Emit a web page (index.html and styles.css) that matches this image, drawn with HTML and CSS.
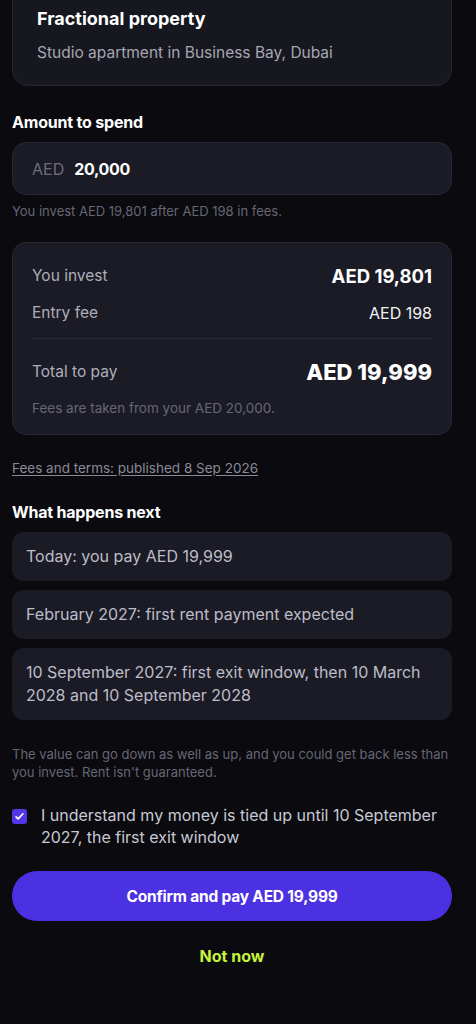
FILE: index.html
```html
<!DOCTYPE html>
<html lang="en">
<head>
    <meta charset="UTF-8">
    <meta name="viewport" content="width=device-width, initial-scale=1.0">
    <title>Confirm investment</title>
    <link rel="stylesheet" href="styles.css">
</head>
<body>
    <div class="page">
        <div class="property-card">
            <div class="property-title">Fractional property</div>
            <div class="property-sub">Studio apartment in Business Bay, Dubai</div>
        </div>

        <div class="section-label amount-label">Amount to spend</div>
        <div class="amount-input">
            <span class="currency">AED</span>
            <span class="amount-value">20,000</span>
        </div>
        <div class="hint">You invest AED 19,801 after AED 198 in fees.</div>

        <div class="summary-card">
            <div class="row">
                <span class="row-label">You invest</span>
                <span class="row-value strong">AED 19,801</span>
            </div>
            <div class="row row-fee">
                <span class="row-label">Entry fee</span>
                <span class="row-value">AED 198</span>
            </div>
            <div class="divider"></div>
            <div class="row row-total">
                <span class="row-label">Total to pay</span>
                <span class="row-value total">AED 19,999</span>
            </div>
            <div class="summary-note">Fees are taken from your AED 20,000.</div>
        </div>

        <a href="#" class="terms-link">Fees and terms: published 8 Sep 2026</a>

        <div class="section-label next-label">What happens next</div>
        <div class="steps">
            <div class="step">Today: you pay AED 19,999</div>
            <div class="step">February 2027: first rent payment expected</div>
            <div class="step">10 September 2027: first exit window, then 10 March 2028 and 10 September 2028</div>
        </div>

        <p class="risk">The value can go down as well as up, and you could get back less than you invest. Rent isn't guaranteed.</p>

        <label class="consent">
            <span class="checkbox">
                <svg viewBox="0 0 16 16" width="11" height="11"><path d="M3 8.5l3 3 7-7.5" fill="none" stroke="#fff" stroke-width="2.4" stroke-linecap="round" stroke-linejoin="round"/></svg>
            </span>
            <span class="consent-text">I understand my money is tied up until 10 September 2027, the first exit window</span>
        </label>

        <button class="confirm">Confirm and pay AED 19,999</button>
        <div class="not-now">Not now</div>
    </div>
</body>
</html>
```

FILE: styles.css
```css
body {
    background-color: #0a0a0f;
    color: #ffffff;
    font-family: 'Inter', 'Noto Sans', sans-serif;
    margin: 0;
    overflow: hidden;
}

.page {
    padding: 0 24px 0 12px;
    margin-top: -16px;
}

.property-card {
    background-color: #17171f;
    border: 1px solid #262631;
    border-radius: 16px;
    padding: 22px 24px 21px;
}

.property-title {
    font-size: 18px;
    font-weight: 700;
    line-height: 24px;
}

.property-sub {
    margin-top: 11px;
    font-size: 15.5px;
    line-height: 22px;
    color: #a6a6b2;
}

.section-label {
    font-size: 16px;
    font-weight: 700;
    line-height: 20px;
    letter-spacing: -0.2px;
}

.amount-label {
    margin-top: 26px;
}

.amount-input {
    margin-top: 10px;
    height: 51px;
    background-color: #1b1b25;
    border: 1px solid #272733;
    border-radius: 14px;
    display: flex;
    align-items: center;
    padding: 0 19px;
}

.currency {
    color: #6d6d7a;
    font-size: 16px;
}

.amount-value {
    margin-left: 10px;
    font-size: 16px;
    font-weight: 700;
    letter-spacing: -0.3px;
}

.hint {
    margin-top: 8px;
    font-size: 13px;
    line-height: 16px;
    color: #676774;
}

.summary-card {
    margin-top: 23px;
    background-color: #1b1b25;
    border: 1px solid #272733;
    border-radius: 14px;
    padding: 21px 19px 17px;
}

.row {
    display: flex;
    justify-content: space-between;
    align-items: center;
    line-height: 24px;
}

.row-fee {
    margin-top: 13px;
}

.row-label {
    font-size: 15.5px;
    color: #aeaeba;
}

.row-value {
    font-size: 16px;
    color: #f2f2f6;
}

.row-value.strong {
    font-size: 18.5px;
    font-weight: 700;
    color: #ffffff;
}

.divider {
    margin-top: 13px;
    border-top: 1px solid #2b2b37;
}

.row-total {
    margin-top: 18px;
    line-height: 30px;
}

.row-value.total {
    font-size: 22px;
    font-weight: 800;
    color: #ffffff;
}

.summary-note {
    margin-top: 12px;
    font-size: 13.5px;
    line-height: 18px;
    color: #676774;
}

.terms-link {
    display: inline-block;
    margin-top: 24px;
    font-size: 13.5px;
    line-height: 18px;
    color: #8a8a97;
    text-decoration: underline;
    text-underline-offset: 2px;
}

.next-label {
    margin-top: 25px;
}

.steps {
    margin-top: 10px;
    display: flex;
    flex-direction: column;
    gap: 9px;
}

.step {
    background-color: #1b1b25;
    border-radius: 12px;
    padding: 13px 14px;
    font-size: 16px;
    line-height: 23px;
    color: #bdbdc8;
}

.risk {
    margin: 25px 0 0;
    font-size: 13px;
    line-height: 18px;
    color: #676774;
}

.consent {
    margin-top: 23px;
    display: flex;
    align-items: flex-start;
    gap: 14px;
}

.checkbox {
    flex: none;
    width: 15px;
    height: 15px;
    margin-top: 5px;
    border-radius: 3px;
    background-color: #5137e6;
    display: flex;
    align-items: center;
    justify-content: center;
}

.consent-text {
    font-size: 16px;
    line-height: 22px;
    color: #c9c9d4;
}

.confirm {
    display: block;
    width: 100%;
    margin-top: 23px;
    height: 50px;
    border: none;
    border-radius: 25px;
    background-color: #4c31e3;
    color: #ffffff;
    font-family: inherit;
    font-size: 15.5px;
    font-weight: 700;
    letter-spacing: -0.2px;
}

.not-now {
    margin-top: 25px;
    text-align: center;
    font-size: 16px;
    font-weight: 700;
    line-height: 20px;
    color: #c6f33a;
}
```
